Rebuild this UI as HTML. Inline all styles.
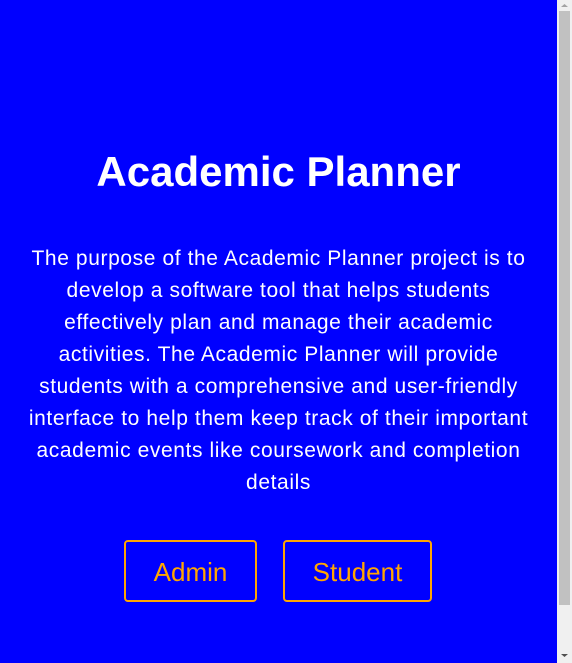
<!DOCTYPE html>
<html><head><style>
html,body{margin:0;padding:0;}
body{width:572px;height:663px;overflow:hidden;background:#0000ff;position:relative;font-family:"Liberation Sans",sans-serif;}
.main{position:absolute;left:0;top:0;width:557px;height:663px;text-align:center;color:#fff;}
h1{position:absolute;left:0;width:557px;top:148px;margin:0;font-size:42px;font-weight:bold;line-height:48px;}
p{position:absolute;left:0;width:557px;top:243px;margin:0;font-size:21px;letter-spacing:0.6px;line-height:32px;}
.btn{position:absolute;top:540px;height:58px;border:2px solid #ffa500;border-radius:4px;color:#ffa500;font-size:26px;line-height:60px;text-align:center;box-sizing:content-box;}
.sb{position:absolute;left:557px;top:0;width:15px;height:663px;background:#f0f0f0;}
.th{position:absolute;left:2px;top:11px;width:11px;height:594px;background:#c1c1c1;}
</style></head><body>
<div class="main">
<h1>Academic Planner</h1>
<p>The purpose of the Academic Planner project is to<br>develop a software tool that helps students<br>effectively plan and manage their academic<br>activities. The Academic Planner will provide<br>students with a comprehensive and user-friendly<br>interface to help them keep track of their important<br>academic events like coursework and completion<br>details</p>
<div class="btn" style="left:124px;width:129px;">Admin</div>
<div class="btn" style="left:283px;width:145px;">Student</div>
</div>
<div class="sb"><div class="th"></div>
<svg style="position:absolute;left:0;top:0" width="15" height="663"><path d="M4 7 L7.5 4 L11 7Z" fill="#a3a3a3"/><path d="M4 654 L7.5 657 L11 654Z" fill="#505050"/></svg>
</div>
</body></html>
